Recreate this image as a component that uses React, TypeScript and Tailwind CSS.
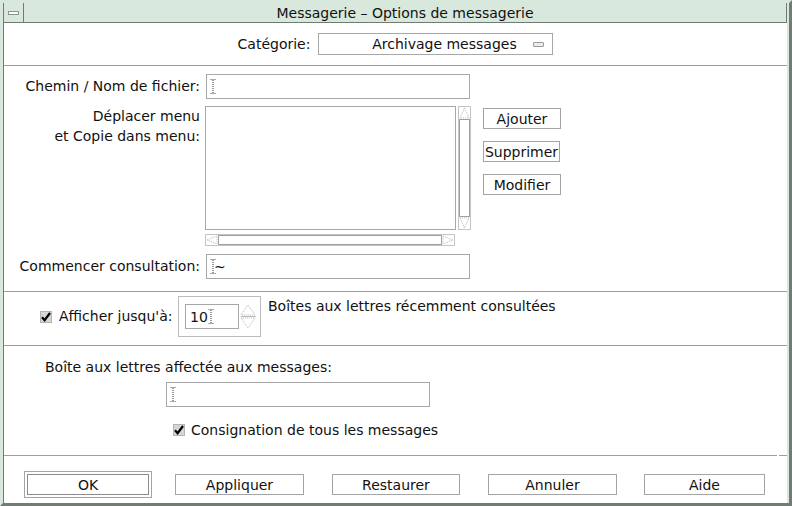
import React from 'react'

const font = { fontFamily: '"DejaVu Sans", "Liberation Sans", sans-serif' }

function Caret() {
  // dotted I-beam text cursor
  return (
    <svg width="6" height="15" viewBox="0 0 6 15" className="shrink-0">
      <path d="M0.5 0.5h5M0.5 14.5h5" stroke="#555" strokeWidth="1" strokeDasharray="1 1" />
      <path d="M3 1v13" stroke="#333" strokeWidth="1" strokeDasharray="1 1" />
    </svg>
  )
}

function CheckBox() {
  return (
    <svg width="12" height="12" viewBox="0 0 12 12" className="shrink-0">
      <rect x="0.5" y="0.5" width="11" height="11" fill="#d6d6d6" stroke="#b4b4b4" />
      <path d="M2 6.2 L4.6 9.2 L10 2" stroke="#000" strokeWidth="2.2" fill="none" />
    </svg>
  )
}

function Tri({ dir, w = 12, h = 12 }: { dir: 'up' | 'down' | 'left' | 'right'; w?: number; h?: number }) {
  const pts = {
    up: `${w / 2},1 ${w - 1},${h - 1} 1,${h - 1}`,
    down: `1,1 ${w - 1},1 ${w / 2},${h - 1}`,
    left: `1,${h / 2} ${w - 1},1 ${w - 1},${h - 1}`,
    right: `1,1 ${w - 1},${h / 2} 1,${h - 1}`,
  }[dir]
  return (
    <svg width={w} height={h} viewBox={`0 0 ${w} ${h}`} className="shrink-0">
      <polygon points={pts} fill="#fff" stroke="#b8b8b8" strokeWidth="1" strokeDasharray="1 1" />
    </svg>
  )
}

function Field({ w, children }: { w: string; children?: React.ReactNode }) {
  return (
    <div className={`${w} h-[25px] border border-[#a8a8a8] bg-white flex items-center pl-[3px]`}>
      {children}
    </div>
  )
}

function Btn({ label, w }: { label: string; w: string }) {
  return (
    <div className={`${w} h-[21px] border border-[#a4a4a4] bg-white flex items-center justify-center text-[14px] leading-none`}>
      {label}
    </div>
  )
}

function Rule() {
  return <div className="h-px bg-[#9e9e9e]" />
}

export default function App() {
  return (
    <div style={font} className="w-[792px] h-[506px] flex border-t-[3px] border-l-[3px] border-[#d9e8dd] border-r-[3px] border-r-[#707d74] border-b-[3px] border-b-[#707d74] text-[#111]">
      <div className="flex-1 flex flex-col border-l border-l-[#6f7b73] border-r-2 border-r-[#d9e8dd] bg-white">
        {/* title bar */}
        <div className="h-[20px] flex bg-[#d9e8dd] border-b border-b-[#6f7b73] border-r border-r-[#6f7b73]">
          <div className="w-[20px] border-r border-r-[#6f7b73] flex items-center justify-center">
            <div className="w-[11px] h-[4px] bg-white border border-[#8a948d]" />
          </div>
          <div className="flex-1 flex items-center justify-center text-[14px] leading-none">
            Messagerie – Options de messagerie
          </div>
        </div>

        {/* catégorie */}
        <div className="pt-[10px] pb-[10px] flex items-center justify-center gap-[8px]">
          <span className="text-[14px]">Catégorie:</span>
          <div className="w-[235px] h-[22px] border border-[#a8a8a8] flex items-center pl-[36px] pr-[8px]">
            <span className="flex-1 text-[14px] text-center leading-none">Archivage messages</span>
            <div className="w-[11px] h-[5px] bg-[#ececec] border border-[#9a9a9a] rounded-[1px]" />
          </div>
        </div>
        <Rule />

        {/* section 1 */}
        <div className="pt-[8px] pb-[12px] flex flex-col">
          <div className="flex items-center">
            <span className="w-[196px] text-right text-[14px]">Chemin / Nom de fichier:</span>
            <div className="ml-[6px]">
              <Field w="w-[264px]"><Caret /></Field>
            </div>
          </div>

          <div className="flex items-start mt-[7px]">
            <div className="w-[196px] text-right text-[14px] leading-[20px]">
              Déplacer menu<br />et Copie dans menu:
            </div>
            <div className="ml-[5px] flex flex-col">
              <div className="flex">
                <div className="w-[251px] h-[124px] border border-[#a8a8a8] bg-white" />
                <div className="ml-[2px] w-[13px] h-[124px] flex flex-col items-center border border-[#c4c4c4]">
                  <Tri dir="up" w={11} h={12} />
                  <div className="flex-1 w-[11px] border border-[#a0a0a0]" />
                  <Tri dir="down" w={11} h={12} />
                </div>
              </div>
              <div className="mt-[4px] w-[250px] h-[12px] flex items-center border border-[#c4c4c4]">
                <Tri dir="left" w={12} h={10} />
                <div className="flex-1 h-[10px] border border-[#a0a0a0]" />
                <Tri dir="right" w={12} h={10} />
              </div>
            </div>
            <div className="ml-[12px] mt-[2px] flex flex-col gap-[12px]">
              <Btn label="Ajouter" w="w-[78px]" />
              <Btn label="Supprimer" w="w-[77px]" />
              <Btn label="Modifier" w="w-[78px]" />
            </div>
          </div>

          <div className="flex items-center mt-[8px]">
            <span className="w-[196px] text-right text-[14px]">Commencer consultation:</span>
            <div className="ml-[6px]">
              <Field w="w-[264px]">
                <Caret />
                <span className="text-[14px] leading-none -ml-[2px]">~</span>
              </Field>
            </div>
          </div>
        </div>
        <Rule />

        {/* section 2 */}
        <div className="pt-[4px] pb-[8px] flex items-start">
          <div className="ml-[36px] w-[138px] h-[41px] flex items-center gap-[7px]">
            <CheckBox />
            <span className="text-[14px]">Afficher jusqu'à:</span>
          </div>
          <div className="w-[83px] h-[41px] border border-[#bcbcbc] flex items-center pl-[6px]">
            <div className="w-[54px] h-[25px] border border-[#a8a8a8] flex items-center pl-[4px]">
              <span className="text-[14px] leading-none">10</span>
              <Caret />
            </div>
            <div className="ml-[1px] flex flex-col items-center">
              <Tri dir="up" w={16} h={12} />
              <div className="w-[15px] h-px bg-[#b8b8b8]" />
              <Tri dir="down" w={16} h={12} />
            </div>
          </div>
          <span className="ml-[7px] text-[14px] leading-[20px]">Boîtes aux lettres récemment consultées</span>
        </div>
        <Rule />

        {/* section 3 */}
        <div className="pt-[11px] pb-[15px] flex flex-col">
          <span className="ml-[41px] text-[14px] leading-[20px]">Boîte aux lettres affectée aux messages:</span>
          <div className="ml-[162px] mt-[5px]">
            <Field w="w-[264px]"><Caret /></Field>
          </div>
          <div className="ml-[169px] mt-[13px] h-[20px] flex items-center gap-[6px]">
            <CheckBox />
            <span className="text-[14px]">Consignation de tous les messages</span>
          </div>
        </div>
        <div className="flex">
          <div className="flex-1 h-px bg-[#9e9e9e]" />
          <div className="w-[2px]" />
          <div className="w-[8px] h-px bg-[#9e9e9e]" />
        </div>

        {/* footer */}
        <div className="pt-[15px] flex items-center">
          <div className="ml-[20px] w-[128px] h-[27px] border border-[#a4a4a4] p-[2px]">
            <div className="h-full border border-[#8c8c8c] flex items-center justify-center text-[14px] leading-none">OK</div>
          </div>
          <div className="ml-[23px]"><Btn label="Appliquer" w="w-[129px]" /></div>
          <div className="ml-[28px]"><Btn label="Restaurer" w="w-[128px]" /></div>
          <div className="ml-[28px]"><Btn label="Annuler" w="w-[129px]" /></div>
          <div className="ml-[27px]"><Btn label="Aide" w="w-[121px]" /></div>
        </div>
      </div>
    </div>
  )
}
